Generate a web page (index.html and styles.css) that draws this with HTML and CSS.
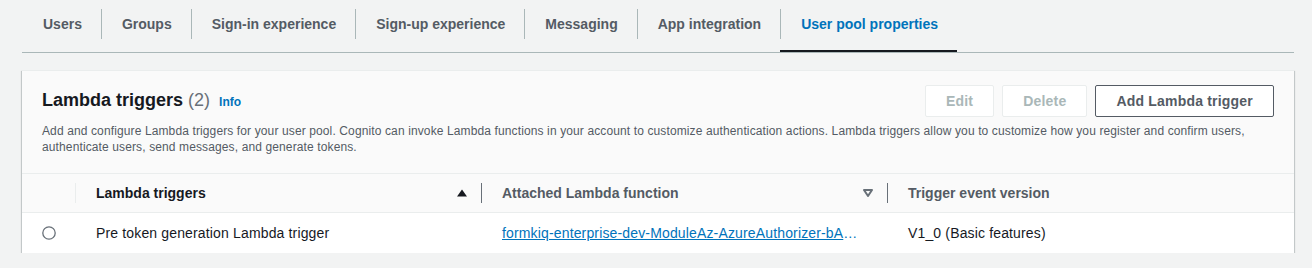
FILE: index.html
```html
<!DOCTYPE html>
<html lang="en">
<head>
<meta charset="utf-8">
<title>User pool properties</title>
<link rel="stylesheet" href="styles.css">
</head>
<body>
<nav class="tabs">
  <div class="tab"><span class="tab-label first">Users</span></div>
  <div class="tab"><span class="tab-label">Groups</span></div>
  <div class="tab"><span class="tab-label">Sign-in experience</span></div>
  <div class="tab"><span class="tab-label">Sign-up experience</span></div>
  <div class="tab"><span class="tab-label">Messaging</span></div>
  <div class="tab"><span class="tab-label">App integration</span></div>
  <div class="tab active"><span class="tab-label">User pool properties</span></div>
</nav>

<section class="panel">
  <header class="panel-header">
    <div class="header-top">
      <h2 class="title">Lambda triggers <span class="count">(2)</span> <a class="info">Info</a></h2>
      <div class="actions">
        <button class="btn disabled">Edit</button>
        <button class="btn disabled">Delete</button>
        <button class="btn">Add Lambda trigger</button>
      </div>
    </div>
    <p class="desc">Add and configure Lambda triggers for your user pool. Cognito can invoke Lambda functions in your account to customize authentication actions. Lambda triggers allow you to customize how you register and confirm users, authenticate users, send messages, and generate tokens.</p>
  </header>

  <div class="table">
    <div class="th"><span class="th-inner light"></span></div>
    <div class="th"><span class="th-inner dark sorted"><span>Lambda triggers</span>
      <svg class="sort" width="12" height="8" viewBox="0 0 12 8"><polygon points="1,7.5 6,0.5 11,7.5" fill="#16191f"/></svg></span></div>
    <div class="th"><span class="th-inner dark"><span>Attached Lambda function</span>
      <svg class="sort" width="12" height="8" viewBox="0 0 12 8"><polygon points="2,1 10,1 6,7" fill="none" stroke="#687078" stroke-width="2" stroke-linejoin="round"/></svg></span></div>
    <div class="th"><span class="th-inner last"><span>Trigger event version</span></span></div>

    <div class="td radio-cell"><svg width="14" height="14" viewBox="0 0 14 14"><circle cx="7" cy="7" r="6.2" fill="#fff" stroke="#687078" stroke-width="1.3"/></svg></div>
    <div class="td">Pre token generation Lambda trigger</div>
    <div class="td"><a class="fn-link">formkiq-enterprise-dev-ModuleAz-AzureAuthorizer-bA</a><span class="ellipsis">…</span></div>
    <div class="td">V1_0 (Basic features)</div>
  </div>
</section>
</body>
</html>
```
FILE: styles.css
```css
* { box-sizing: border-box; }

html, body {
  margin: 0;
  background: #f2f3f3;
}

body {
  padding: 0 18px 0 22px;
  font-family: "Liberation Sans", Arial, sans-serif;
  color: #16191f;
}

.tabs {
  display: flex;
  border-bottom: 1px solid #aab7b8;
}

.tab {
  padding: 9px 0 11px;
  border-bottom: 2px solid transparent;
}

.tab.active {
  border-bottom-color: #16191f;
}

.tab-label {
  display: block;
  padding: 0 19px 0 20px;
  line-height: 30px;
  border-left: 1px solid #aab7b8;
  font-size: 14px;
  font-weight: 700;
  color: #545b64;
  white-space: nowrap;
}

.tab-label.first {
  border-left: none;
  padding-left: 21px;
}

.tab.active .tab-label {
  color: #0073bb;
}

.panel {
  margin-top: 17px;
  background: #fff;
  border-top: 1px solid #eaeded;
  box-shadow: 0 1px 1px 0 rgba(0, 28, 36, 0.3), 1px 1px 1px 0 rgba(0, 28, 36, 0.15), -1px 1px 1px 0 rgba(0, 28, 36, 0.15);
}

.panel-header {
  background: #fafafa;
  padding: 14px 20px 18px;
  border-bottom: 1px solid #eaeded;
}

.header-top {
  display: flex;
  justify-content: space-between;
  align-items: center;
}

.title {
  margin: 0;
  font-size: 18px;
  line-height: 22px;
  font-weight: 700;
  color: #16191f;
}

.count {
  font-weight: 400;
  color: #687078;
}

.info {
  margin-left: 4px;
  font-size: 12px;
  font-weight: 700;
  color: #0073bb;
}

.actions {
  display: flex;
  gap: 8px;
}

.btn {
  height: 32px;
  padding: 0 20px;
  border: 1px solid #545b64;
  border-radius: 2px;
  background: #fff;
  font-family: inherit;
  font-size: 14px;
  font-weight: 700;
  letter-spacing: 0.2px;
  color: #545b64;
}

.btn.disabled {
  border-color: #eaeded;
  color: #aab7b8;
}

.desc {
  margin: 6px 0 0;
  font-size: 12px;
  line-height: 16px;
  letter-spacing: 0.12px;
  color: #545b64;
}

.table {
  display: grid;
  grid-template-columns: 54px 406px 406px 1fr;
}

.th {
  background: #fafafa;
  height: 39px;
  display: flex;
  align-items: center;
  border-bottom: 1px solid #eaeded;
  font-size: 14px;
  font-weight: 700;
  color: #545b64;
}

.th-inner {
  flex: 1;
  height: 20px;
  display: flex;
  align-items: center;
  justify-content: space-between;
  padding: 0 13px 0 20px;
  white-space: nowrap;
}

.th-inner.light {
  border-right: 1px solid #eaeded;
}

.th-inner.dark {
  border-right: 1px solid #687078;
}

.th-inner.sorted {
  color: #16191f;
}

.sort {
  display: block;
}

.td {
  height: 40px;
  display: flex;
  align-items: center;
  padding: 0 20px;
  font-size: 14px;
  letter-spacing: 0.15px;
  color: #16191f;
  white-space: nowrap;
}

.radio-cell {
  padding: 0;
  justify-content: center;
}

.radio-cell svg {
  display: block;
}

.fn-link {
  color: #0073bb;
  text-decoration: underline;
}

.ellipsis {
  color: #0073bb;
}
```
